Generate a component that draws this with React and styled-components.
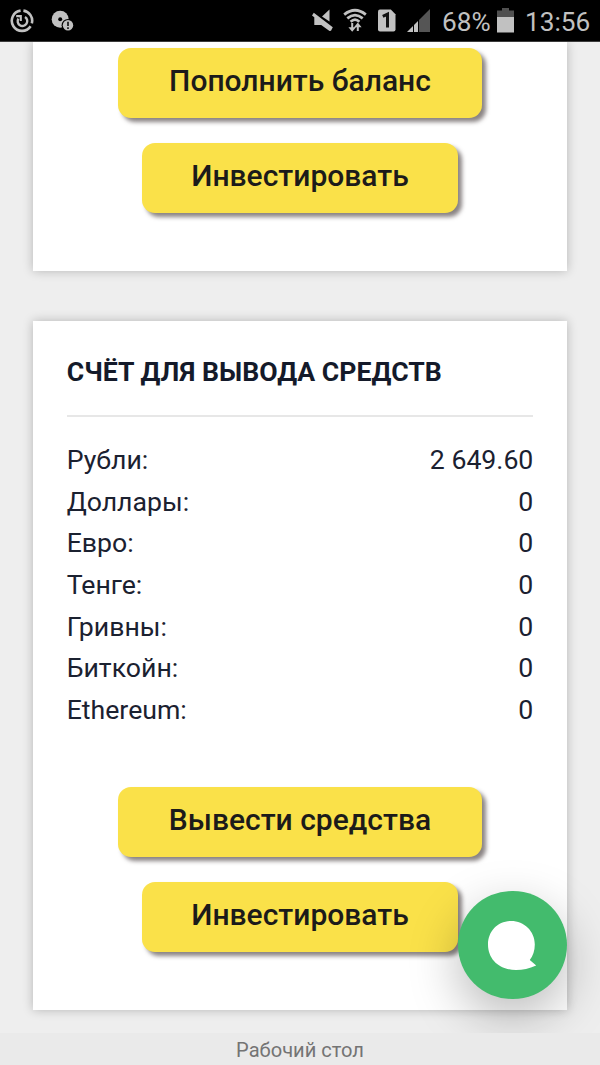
import React from "react";
import styled, { createGlobalStyle } from "styled-components";

const GlobalStyle = createGlobalStyle`
  *, *::before, *::after { box-sizing: border-box; }
  html, body { margin: 0; padding: 0; }
  body { background: #ececec; font-family: Roboto, "Liberation Sans", sans-serif; }
`;

const Screen = styled.div`
  display: flex;
  flex-direction: column;
  width: 600px;
  height: 1065px;
  overflow: hidden;
`;

const StatusBar = styled.header`
  display: flex;
  flex: none;
  align-items: center;
  height: 42px;
  background: #000;
  color: #c1c1c1;
  border-bottom: 1px solid #3c3c3c;
`;

const StatusIcon = styled.svg`
  display: block;
  flex: none;
  width: ${(p) => p.$w}px;
  height: 41px;
  margin-left: ${(p) => p.$gap}px;
`;

const StatusText = styled.span`
  flex: none;
  width: ${(p) => p.$w}px;
  margin-left: ${(p) => p.$gap}px;
  padding-top: 3px;
  font-size: 26.2px;
  line-height: 38px;
  white-space: nowrap;
`;

const Content = styled.main`
  position: relative;
  flex: none;
  display: flex;
  flex-direction: column;
  gap: 50px;
  height: 991px;
  padding: 0 33.33px;
  overflow: hidden;
  background: #eee;
`;

const Card = styled.section`
  display: flex;
  flex: none;
  flex-direction: column;
  height: ${(p) => p.$height}px;
  padding: ${(p) => p.$top}px 33.33px 0;
  background: #fff;
  box-shadow: 0 0 10px rgba(0, 0, 0, 0.24);
`;

const CardTitle = styled.h2`
  margin: 0;
  padding-bottom: 23.4px;
  border-bottom: 2px solid #e7e7e7;
  color: #141a2a;
  font-size: 26.67px;
  font-weight: 700;
  letter-spacing: 0.03px;
  line-height: 40px;
  white-space: nowrap;
`;

const Balances = styled.dl`
  margin: 22.7px 0 55.8px;
`;

const BalanceRow = styled.div`
  display: flex;
  justify-content: space-between;
  color: #1b2130;
  font-size: 26.67px;
  line-height: 41.67px;
`;

const Currency = styled.dt``;

const Amount = styled.dd`
  margin: 0;
`;

const Actions = styled.div`
  display: flex;
  flex-direction: column;
  align-items: center;
  gap: 25px;
`;

const ActionButton = styled.button`
  width: ${(p) => p.$width}px;
  height: 70px;
  padding: 0 0 4px;
  border: 0;
  border-radius: 13px;
  background: #fae149;
  box-shadow: 4px 4px 4px rgba(60, 50, 50, 0.6);
  color: #1c1b1a;
  font-family: inherit;
  font-size: 30px;
  font-weight: 500;
  line-height: 40px;
  white-space: nowrap;
`;

const ChatButton = styled.button`
  position: absolute;
  right: 33.3px;
  bottom: 34px;
  width: 108.5px;
  height: 108.5px;
  padding: 0;
  border: 0;
  border-radius: 50%;
  background: #43bb6d;
  box-shadow: 0 18px 50px rgba(0, 0, 0, 0.27);
`;

const ChatIcon = styled.svg`
  display: block;
  width: 108.5px;
  height: 108.5px;
`;

const BottomBar = styled.footer`
  flex: 1;
  padding-top: 1px;
  background: #eaeaea;
  color: #747474;
  font-size: 20.1px;
  line-height: 32px;
  text-align: center;
`;

const balances = [
  ["Рубли:", "2 649.60"],
  ["Доллары:", "0"],
  ["Евро:", "0"],
  ["Тенге:", "0"],
  ["Гривны:", "0"],
  ["Биткойн:", "0"],
  ["Ethereum:", "0"],
];

function PowerSwirlIcon() {
  return (
    <StatusIcon $w={24} $gap={10} viewBox="0 0 24 41" fill="none" stroke="#c1c1c1">
      <path d="M10.6 10.6A10.2 10.2 0 1 0 20.6 26.2" strokeWidth="2.6" />
      <path d="M13.4 10.6A10.2 10.2 0 0 1 21.8 23.4" strokeWidth="2.6" />
      <path d="M15 17.1A4.8 4.8 0 1 1 8.4 18.6" strokeWidth="2.4" />
      <path d="M6.2 16.1H10.8V21" strokeWidth="2.1" />
    </StatusIcon>
  );
}

function DiscAlertIcon() {
  return (
    <StatusIcon $w={23} $gap={17} viewBox="0 0 23 41">
      <circle cx="9.2" cy="19.2" r="8.5" fill="#c1c1c1" />
      <circle cx="9.2" cy="19.2" r="2" fill="#000" />
      <circle cx="17" cy="25.3" r="6.4" fill="#000" />
      <circle cx="17" cy="25.3" r="5.2" fill="#c1c1c1" />
      <path d="M17 21.8v4.2M17 27.2v1.8" stroke="#222" strokeWidth="1.8" />
    </StatusIcon>
  );
}

function MuteIcon() {
  return (
    <StatusIcon $w={22} $gap={237} viewBox="0 0 22 41">
      <path d="M11 16.4 18.5 9.5V21.5Z" fill="#c1c1c1" />
      <path d="M2.8 12.8 21.8 27.2 20 30.8 18.5 31 10.2 24.9H3.3V17.2L1 15.6Z" fill="#c1c1c1" />
    </StatusIcon>
  );
}

function WifiIcon() {
  return (
    <StatusIcon $w={24} $gap={10} viewBox="0 0 24 41" fill="none" stroke="#c1c1c1">
      <path d="M1.2 14.6Q12 6 22.8 14.6" strokeWidth="2.8" />
      <path d="M4.3 18.4Q12 12 19.7 18.4" strokeWidth="2.7" />
      <path d="M7.6 21.8Q12 17.6 16.4 21.8" strokeWidth="2.6" />
      <path d="M9.2 23V29M14.8 31V25" strokeWidth="2" />
      <path d="M5.4 27.2H13L9.2 31.8ZM11 27.2H18.6L14.8 22.6Z" fill="#c1c1c1" stroke="none" />
    </StatusIcon>
  );
}

function SimIcon() {
  return (
    <StatusIcon $w={18} $gap={11} viewBox="0 0 18 41">
      <path d="M2 9.5H12.8L17.5 14.3V29.5Q17.5 31.5 15.5 31.5H2Q0 31.5 0 29.5V11.5Q0 9.5 2 9.5Z" fill="#c1c1c1" />
      <path d="M4.8 16.4 9.5 14.2V27.5" fill="none" stroke="#111" strokeWidth="3" />
    </StatusIcon>
  );
}

function SignalIcon() {
  return (
    <StatusIcon $w={23} $gap={11} viewBox="0 0 23 41">
      <path d="M23 9V32H12V20Z" fill="#555" />
      <path d="M11 21V32H7V25Z" fill="#c1c1c1" />
      <path d="M6 26V32H0Z" fill="#c1c1c1" />
    </StatusIcon>
  );
}

function BatteryIcon() {
  return (
    <StatusIcon $w={17} $gap={6} viewBox="0 0 17 41">
      <path d="M0 10.5H5V8H12V10.5H17V17H0Z" fill="#505050" />
      <path d="M0 17H17V32.5H0Z" fill="#c1c1c1" />
    </StatusIcon>
  );
}

export default function App() {
  return (
    <Screen>
      <GlobalStyle />
      <StatusBar>
        <PowerSwirlIcon />
        <DiscAlertIcon />
        <MuteIcon />
        <WifiIcon />
        <SimIcon />
        <SignalIcon />
        <StatusText $w={49} $gap={12}>68%</StatusText>
        <BatteryIcon />
        <StatusText $w={67} $gap={11}>13:56</StatusText>
      </StatusBar>
      <Content>
        <Card $height={228.5} $top={5.5}>
          <Actions>
            <ActionButton $width={363.5}>Пополнить баланс</ActionButton>
            <ActionButton $width={316.5}>Инвестировать</ActionButton>
          </Actions>
        </Card>
        <Card $height={689.4} $top={31.3}>
          <CardTitle>СЧЁТ ДЛЯ ВЫВОДА СРЕДСТВ</CardTitle>
          <Balances>
            {balances.map(([name, amount]) => (
              <BalanceRow key={name}>
                <Currency>{name}</Currency>
                <Amount>{amount}</Amount>
              </BalanceRow>
            ))}
          </Balances>
          <Actions>
            <ActionButton $width={363.5}>Вывести средства</ActionButton>
            <ActionButton $width={316.5}>Инвестировать</ActionButton>
          </Actions>
        </Card>
        <ChatButton aria-label="Чат">
          <ChatIcon viewBox="0 0 108.5 108.5">
            <path
              d="M53.3 30C66 30 76.8 40 76.8 53.5C76.8 60 75 64.8 71.8 69L78.2 74.6C71 78 65 79 58 79C41.5 79 30 68.5 30 53.5C30 40 40 30 53.3 30Z"
              fill="#fff"
            />
          </ChatIcon>
        </ChatButton>
      </Content>
      <BottomBar>Рабочий стол</BottomBar>
    </Screen>
  );
}
